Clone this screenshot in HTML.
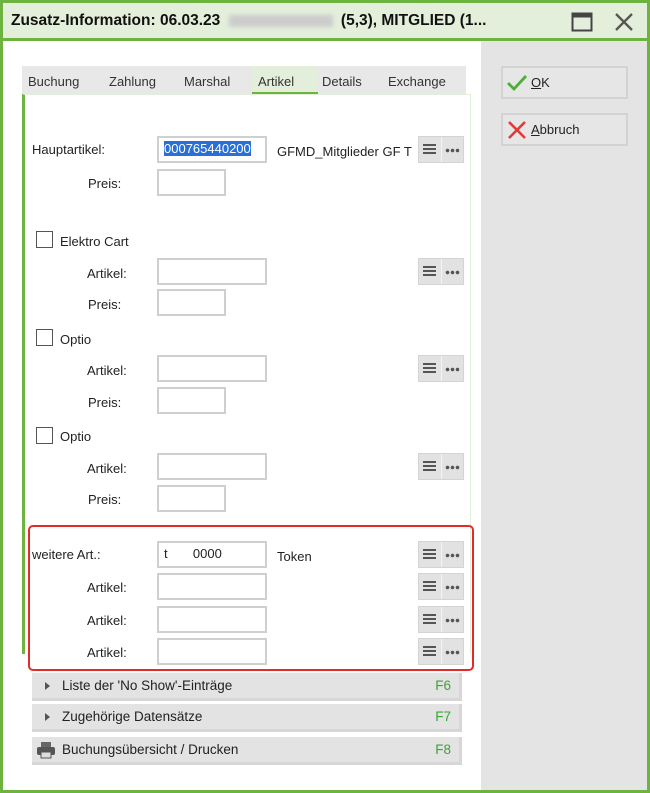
<!DOCTYPE html>
<html><head><meta charset="utf-8"><style>
*{box-sizing:border-box;margin:0;padding:0}
body{width:650px;height:793px;overflow:hidden;background:#fff;font-family:"Liberation Sans","DejaVu Sans",sans-serif;font-size:13px;color:#222}
.abs{position:absolute}
#win{position:absolute;left:0;top:0;width:650px;height:793px;border:3px solid #6db33f;background:#fff;overflow:hidden}
#title{position:absolute;left:0;top:0;width:644px;height:38px;background:#e3efda;border-bottom:3px solid #6db33f;font-weight:bold;font-size:15.5px;line-height:36px;padding-left:8px;color:#111}
.blur{display:inline-block;width:104px;height:12px;background:#ccc;filter:blur(2px);vertical-align:middle;margin:0 4px}
#right{position:absolute;left:478px;top:38px;width:166px;height:749px;background:#e4e4e4}
.btn{position:absolute;left:20px;width:127px;height:33px;border:2px solid #d3d3d3;background:#e6e6e6;font-size:13px;line-height:29px;padding-left:28px}
.tabs{position:absolute;left:19px;top:63px;width:444px;height:28px;background:#e8e8e8}
.tab{position:absolute;top:8px;font-size:13px;color:#333}
.panel{position:absolute;left:19px;top:91px;width:449px;height:560px;border-left:3px solid #6db33f;border-top:1px solid #e3efda;border-right:1px solid #e3efda}
.lbl{position:absolute;font-size:13px}
.inp{position:absolute;height:27px;border:2px solid #cfcfcf;background:#fff;font-size:13px;line-height:22px;padding-left:5px}
.bt{position:absolute;width:46px;height:27px;border:1px solid #d4d4d4;background-image:radial-gradient(circle,#555 1.6px,transparent 2px),radial-gradient(circle,#555 1.6px,transparent 2px),radial-gradient(circle,#555 1.6px,transparent 2px);background-size:5px 5px;background-position:26px 11px,31px 11px,36px 11px;background-repeat:no-repeat;background-color:#e2e2e2}
.bt:after{content:"";position:absolute;left:22px;top:0;width:1px;height:25px;background:#f4f4f4}
.bt::before{content:"";position:absolute;left:4px;top:7px;width:13px;height:2px;background:#555;box-shadow:0 4px 0 #555,0 8px 0 #555}
.cb{position:absolute;width:17px;height:17px;border:1px solid #555;background:#fff}
.bar{position:absolute;left:29px;width:430px;height:28px;background:#e3e3e3;border-right:3px solid #d6d6d6;border-bottom:3px solid #d6d6d6;font-size:13.5px;line-height:25px;padding-left:30px}
.bar .f{position:absolute;right:8px;top:0;color:#3aa535}
.tri{position:absolute;left:13px;top:9px;width:0;height:0;border-left:5px solid #555;border-top:4px solid transparent;border-bottom:4px solid transparent}
</style></head><body>
<div id="win">
<div id="title">Zusatz-Information: 06.03.23 <span class="blur"></span> (5,3), MITGLIED (1...
<svg class="abs" style="left:568px;top:9px" width="22" height="20"><rect x="1.5" y="1.5" width="19" height="17" fill="none" stroke="#444" stroke-width="2"/><rect x="1.5" y="1.5" width="19" height="4" fill="#444"/></svg>
<svg class="abs" style="left:611px;top:9px" width="20" height="20"><path d="M2 2L18 18M18 2L2 18" stroke="#555" stroke-width="2.3"/></svg>
</div>
<div id="right">
<div class="btn" style="top:25px"><svg class="abs" style="left:3px;top:5px" width="22" height="20"><path d="M2 10L8 16L20 3" fill="none" stroke="#4caf3a" stroke-width="2.8"/></svg><u>O</u>K</div>
<div class="btn" style="top:72px"><svg class="abs" style="left:4px;top:5px" width="20" height="20"><path d="M2 2L18 18M18 2L2 18" stroke="#e03a3a" stroke-width="2.6"/></svg><u>A</u>bbruch</div>
</div>
<div class="tabs">
<span class="tab" style="left:6px">Buchung</span>
<span class="tab" style="left:87px">Zahlung</span>
<span class="tab" style="left:162px">Marshal</span>
<div class="abs" style="left:230px;top:0;width:66px;height:28px;background:#e3efda;border-bottom:2px solid #6db33f"></div>
<span class="tab" style="left:236px;z-index:1">Artikel</span>
<span class="tab" style="left:300px">Details</span>
<span class="tab" style="left:366px">Exchange</span>
</div>
<div class="panel"></div>

<div class="lbl" style="left:29px;top:139px">Hauptartikel:</div>
<div class="inp" style="left:154px;top:133px;width:110px"><span style="background:#2a6fd6;color:#fff">000765440200</span></div>
<div class="lbl" style="left:274px;top:141px;width:142px;overflow:hidden;white-space:nowrap">GFMD_Mitglieder GF T</div>
<div class="bt" style="left:415px;top:133px"></div>
<div class="lbl" style="left:85px;top:173px">Preis:</div>
<div class="inp" style="left:154px;top:166px;width:69px"></div>

<div class="cb" style="left:33px;top:228px"></div><div class="lbl" style="left:57px;top:231px">Elektro Cart</div>
<div class="lbl" style="left:84px;top:263px">Artikel:</div><div class="inp" style="left:154px;top:255px;width:110px"></div><div class="bt" style="left:415px;top:255px"></div>
<div class="lbl" style="left:85px;top:294px">Preis:</div><div class="inp" style="left:154px;top:286px;width:69px"></div>

<div class="cb" style="left:33px;top:326px"></div><div class="lbl" style="left:57px;top:329px">Optio</div>
<div class="lbl" style="left:84px;top:360px">Artikel:</div><div class="inp" style="left:154px;top:352px;width:110px"></div><div class="bt" style="left:415px;top:352px"></div>
<div class="lbl" style="left:85px;top:392px">Preis:</div><div class="inp" style="left:154px;top:384px;width:69px"></div>

<div class="cb" style="left:33px;top:424px"></div><div class="lbl" style="left:57px;top:426px">Optio</div>
<div class="lbl" style="left:84px;top:458px">Artikel:</div><div class="inp" style="left:154px;top:450px;width:110px"></div><div class="bt" style="left:415px;top:450px"></div>
<div class="lbl" style="left:85px;top:489px">Preis:</div><div class="inp" style="left:154px;top:482px;width:69px"></div>

<div class="abs" style="left:25px;top:522px;width:446px;height:146px;border:2px solid #e52a2a;border-radius:5px"></div>
<div class="lbl" style="left:29px;top:544px">weitere Art.:</div>
<div class="inp" style="left:154px;top:538px;width:110px">t&nbsp;&nbsp;&nbsp;&nbsp;&nbsp;&nbsp;&nbsp;0000</div>
<div class="lbl" style="left:274px;top:546px">Token</div><div class="bt" style="left:415px;top:538px"></div>
<div class="lbl" style="left:84px;top:577px">Artikel:</div><div class="inp" style="left:154px;top:570px;width:110px"></div><div class="bt" style="left:415px;top:570px"></div>
<div class="lbl" style="left:84px;top:610px">Artikel:</div><div class="inp" style="left:154px;top:603px;width:110px"></div><div class="bt" style="left:415px;top:603px"></div>
<div class="lbl" style="left:84px;top:642px">Artikel:</div><div class="inp" style="left:154px;top:635px;width:110px"></div><div class="bt" style="left:415px;top:635px"></div>

<div class="bar" style="top:670px"><div class="tri"></div>Liste der 'No Show'-Einträge<span class="f">F6</span></div>
<div class="bar" style="top:701px"><div class="tri"></div>Zugehörige Datensätze<span class="f">F7</span></div>
<div class="bar" style="top:734px"><svg class="abs" style="left:4px;top:4px" width="20" height="18"><rect x="5" y="1" width="10" height="5" fill="#666"/><rect x="1" y="6" width="18" height="8" rx="2" fill="#555"/><rect x="5" y="11" width="10" height="6" fill="#ddd" stroke="#555"/></svg>Buchungsübersicht / Drucken<span class="f">F8</span></div>
</div>
</body></html>
